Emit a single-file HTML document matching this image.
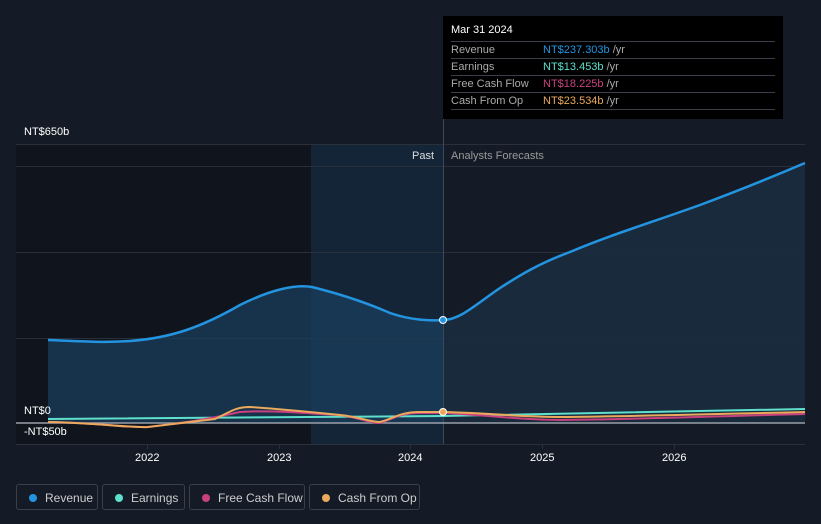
<!DOCTYPE html><html><head><style>
body{margin:0;width:821px;height:524px;background:#151b26;font-family:"Liberation Sans",sans-serif;overflow:hidden;position:relative}
.t{position:absolute;font-size:11px;color:#fff}
.tip{position:absolute;left:443px;top:16px;width:340px;height:103px;background:#000}
.tip .r{position:absolute;left:8px;width:324px;border-top:1px solid #3a3f47;font-size:11px;color:#aaa;height:17px;line-height:17px}
.tip .v{position:absolute;left:92px}
.leg{position:absolute;top:484px;height:26px;border:1px solid #3a404a;border-radius:3px;font-size:12px;color:#ccc;line-height:26px;box-sizing:border-box}
.leg i{position:absolute;left:12px;top:9px;width:8px;height:8px;border-radius:50%}
</style></head><body>
<svg width="821" height="524" style="position:absolute;left:0;top:0">
<rect x="16" y="144" width="295" height="300" fill="#10151d"/>
<rect x="311" y="144" width="133" height="300" fill="#142538"/>
<g stroke="#2a303a" stroke-width="1">
<line x1="16" y1="144.5" x2="805" y2="144.5"/><line x1="16" y1="166.5" x2="805" y2="166.5"/><line x1="16" y1="252.5" x2="805" y2="252.5"/><line x1="16" y1="338.5" x2="805" y2="338.5"/><line x1="16" y1="444.5" x2="805" y2="444.5"/>
<line x1="147.5" y1="444" x2="147.5" y2="449"/><line x1="279.5" y1="444" x2="279.5" y2="449"/><line x1="410.5" y1="444" x2="410.5" y2="449"/><line x1="542.5" y1="444" x2="542.5" y2="449"/><line x1="674.5" y1="444" x2="674.5" y2="449"/>
</g>
<path d="M48,340 C80,341 100,343 130,341 C170,338 200,328 240,305 C270,290 295,284 312,287 C340,294 365,302 390,313 C410,320 430,321 443,320 L443,423 L48,423Z" fill="#1a3d5c" opacity="0.75"/>
<path d="M443,320 C460,320 475,305 500,288 C520,275 540,263 570,252 C610,235 650,223 700,205 C740,190 770,178 805,163 L805,423 L443,423Z" fill="#1a2c40" opacity="0.9"/>
<line x1="443.5" y1="16" x2="443.5" y2="444" stroke="#3a4a5c"/>
<path d="M48,340 C80,341 100,343 130,341 C170,338 200,328 240,305 C270,290 295,284 312,287 C340,294 365,302 390,313 C410,320 430,321 443,320 C460,320 475,305 500,288 C520,275 540,263 570,252 C610,235 650,223 700,205 C740,190 770,178 805,163" fill="none" stroke="#2394e0" stroke-width="2.5"/>
<line x1="16" y1="423" x2="805" y2="423" stroke="#9aa0a8" stroke-width="1.5"/>
<path d="M48,419 L443,416 C550,414 650,411 805,409" fill="none" stroke="#5ee0cc" stroke-width="2"/>
<path d="M48,422 C100,423 130,428 148,427 C180,423 200,421 240,412 C270,410 300,413 340,415 C360,418 370,423 380,423 C395,418 400,413 420,413 L443,413 C490,415 520,420 560,420 C650,419 720,416 805,414" fill="none" stroke="#c8417e" stroke-width="2"/>
<path d="M48,422 C100,423 130,428 148,427 C180,423 200,421 215,419 C230,412 235,407 250,407 C280,409 310,412 340,415 C360,417 370,422 380,422 C395,418 400,412 420,412 L443,412 C490,413 520,417 560,417 C650,416 720,414 805,412" fill="none" stroke="#eaa95c" stroke-width="2"/>
<circle cx="443" cy="320" r="3.5" fill="#2394e0" stroke="#fff"/>
<circle cx="443" cy="412" r="3.5" fill="#eaa95c" stroke="#fff"/>
</svg>
<div class="t" style="left:24px;top:126px">NT$650b</div>
<div class="t" style="left:24px;top:405px">NT$0</div>
<div class="t" style="left:24px;top:426px">-NT$50b</div>
<div class="t" style="left:412px;top:150px;color:#ddd">Past</div>
<div class="t" style="left:451px;top:150px;color:#999">Analysts Forecasts</div>
<div class="t" style="left:135px;top:452px">2022</div><div class="t" style="left:267px;top:452px">2023</div><div class="t" style="left:398px;top:452px">2024</div><div class="t" style="left:530px;top:452px">2025</div><div class="t" style="left:662px;top:452px">2026</div>
<div class="tip">
<div style="position:absolute;left:8px;top:8px;color:#fff;font-size:11px">Mar 31 2024</div>
<div class="r" style="top:25px">Revenue<span class="v"><span style="color:#2394e0">NT$237.303b</span> /yr</span></div>
<div class="r" style="top:42px">Earnings<span class="v"><span style="color:#5ee0cc">NT$13.453b</span> /yr</span></div>
<div class="r" style="top:59px">Free Cash Flow<span class="v"><span style="color:#c8417e">NT$18.225b</span> /yr</span></div>
<div class="r" style="top:76px">Cash From Op<span class="v"><span style="color:#eaa95c">NT$23.534b</span> /yr</span></div>
<div class="r" style="top:93px;height:0"></div>
</div>
<div class="leg" style="left:16px;width:82px"><i style="background:#2394e0"></i><span style="margin-left:28px">Revenue</span></div>
<div class="leg" style="left:102px;width:83px"><i style="background:#5ee0cc"></i><span style="margin-left:28px">Earnings</span></div>
<div class="leg" style="left:189px;width:116px"><i style="background:#c8417e"></i><span style="margin-left:28px">Free Cash Flow</span></div>
<div class="leg" style="left:309px;width:111px"><i style="background:#eaa95c"></i><span style="margin-left:28px">Cash From Op</span></div>
</body></html>
